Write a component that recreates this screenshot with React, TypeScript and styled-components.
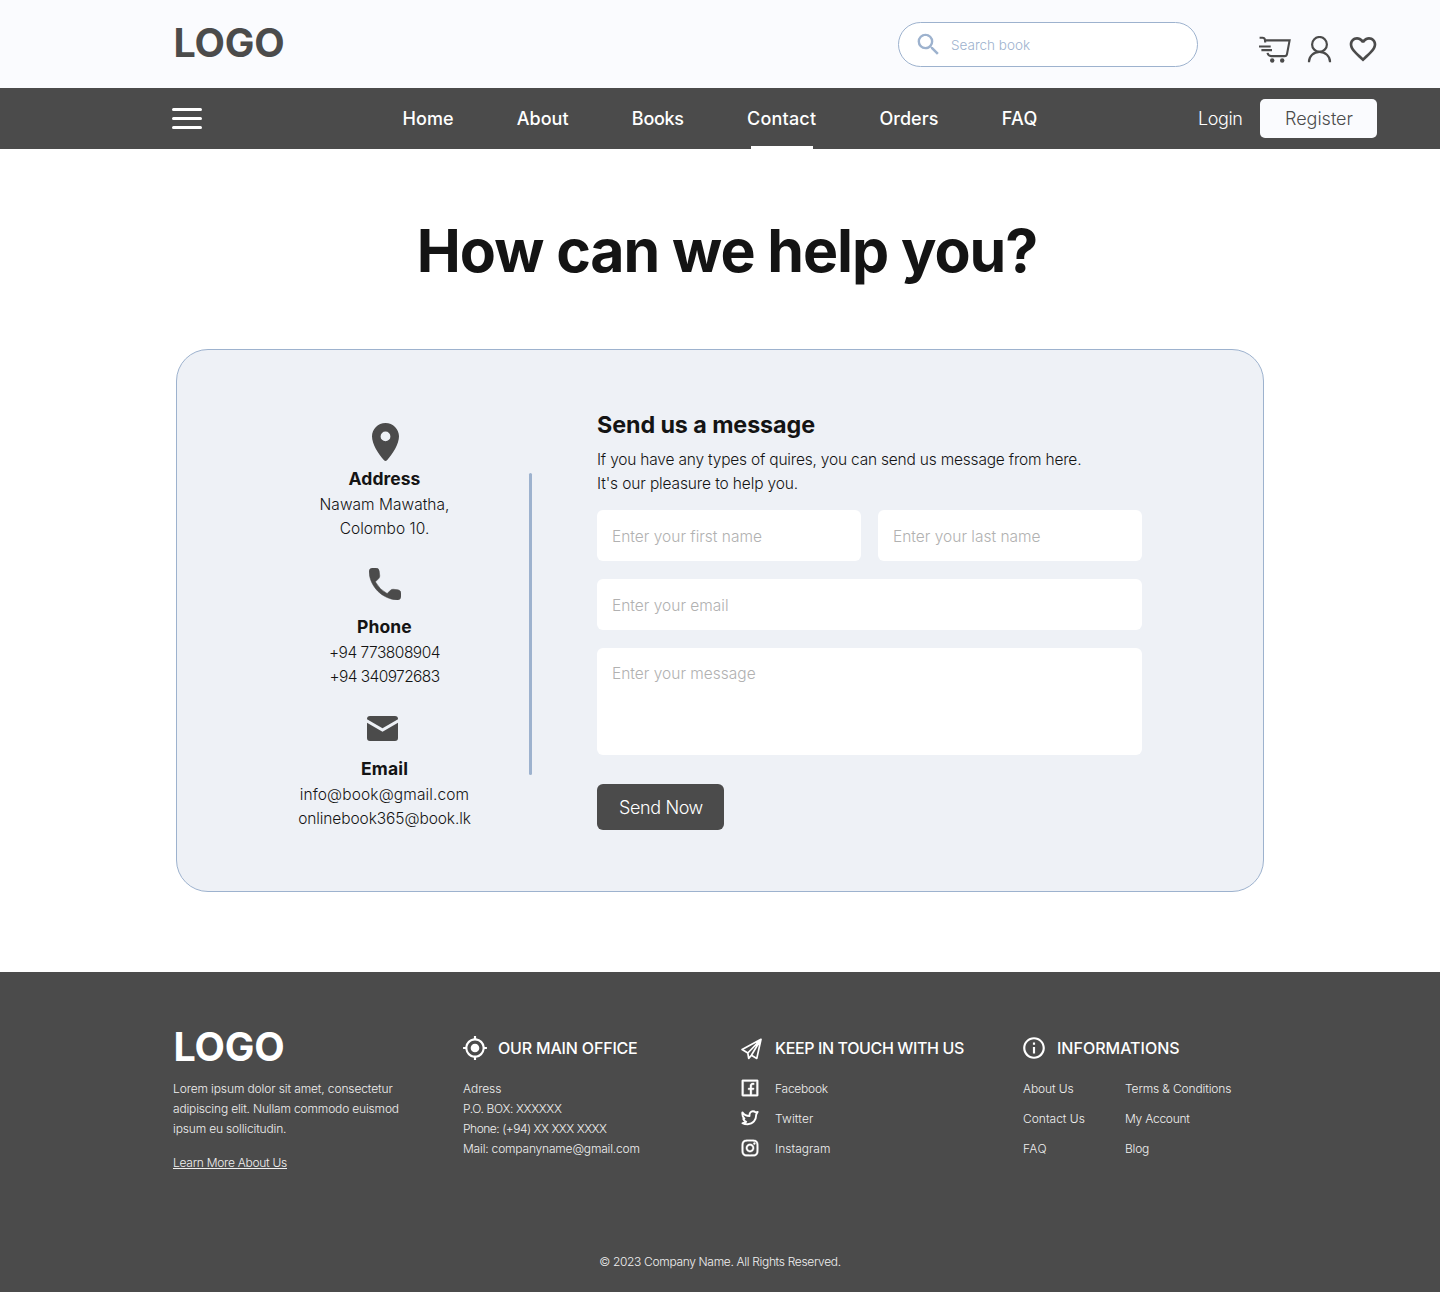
import React from "react";
import styled, { createGlobalStyle } from "styled-components";
import { MdSearch, MdFavoriteBorder, MdMyLocation, MdInfoOutline } from "react-icons/md";
import { RiFacebookBoxLine, RiInstagramLine } from "react-icons/ri";

const ink = "#4b4b4b";
const pale = "#fafbfe";
const blue = "#9db2ce";
const text = "#141414";

type Track = { $track?: number };

const GlobalStyle = createGlobalStyle`
  *, *::before, *::after { box-sizing: border-box; }
  body {
    margin: 0;
    background: #fff;
    color: ${text};
    font-family: Inter, "Liberation Sans", sans-serif;
    font-weight: 300;
  }
  a { color: inherit; text-decoration: none; }
  h1, h2, h3, p, ul { margin: 0; padding: 0; }
  ul { list-style: none; }
  svg { display: block; flex: none; }
  input, textarea, button { font: inherit; border: 0; outline: 0; }
`;

const Page = styled.div`
  width: 1440px;
  height: 1292px;
  display: flex;
  flex-direction: column;
`;

const TopBar = styled.header`
  height: 88px;
  flex: none;
  display: flex;
  align-items: flex-start;
  padding: 22px 63px 0 172px;
  background: ${pale};
`;

const Logo = styled.a`
  display: block;
  height: 41px;
  padding-left: 0.5px;
  font-size: 39.5px;
  line-height: 43px;
  font-weight: 700;
  letter-spacing: -0.2px;
  color: inherit;
`;

const HeaderLogo = styled(Logo)`
  padding-left: 1.5px;
  color: ${ink};
  margin-right: auto;
`;

const SearchBox = styled.label`
  width: 300px;
  height: 45px;
  display: flex;
  align-items: center;
  gap: 8px;
  padding: 0 20px 0 15px;
  border: 1px solid ${blue};
  border-radius: 22.5px;
  background: #fff;
  color: ${blue};
`;

const SearchInput = styled.input`
  flex: 1;
  min-width: 0;
  padding: 0;
  font-size: 13.5px;
  line-height: 20px;
  background: transparent;
  color: ${ink};
  &::placeholder { color: ${blue}; opacity: 1; }
`;

const HeaderIcons = styled.div`
  height: 54px;
  display: flex;
  align-items: center;
  gap: 15px;
  margin-left: 61px;
  margin-right: -2px;
  color: ${ink};
`;

const NavBar = styled.nav`
  height: 61px;
  flex: none;
  display: flex;
  align-items: center;
  padding: 0 63px 0 172px;
  background: ${ink};
  color: #fff;
`;

const MenuButton = styled.button`
  width: 30px;
  padding: 0;
  display: flex;
  flex-direction: column;
  gap: 6px;
  background: transparent;
`;

const MenuLine = styled.span`
  height: 3px;
  border-radius: 1.5px;
  background: #fff;
`;

const NavList = styled.ul`
  display: flex;
  gap: 63.3px;
  margin-left: 200.5px;
  height: 61px;
`;

const NavLink = styled.a<Track & { $active?: boolean }>`
  height: 61px;
  display: block;
  position: relative;
  font-size: 18px;
  line-height: 61px;
  font-weight: 500;
  letter-spacing: ${(p) => p.$track ?? 0}px;
  &::after {
    content: "";
    display: ${(p) => (p.$active ? "block" : "none")};
    position: absolute;
    left: 3.6px;
    bottom: 0;
    width: 62px;
    height: 3px;
    background: #fff;
  }
`;

const Account = styled.div`
  display: flex;
  align-items: center;
  gap: 17.500px;
  margin-left: auto;
`;

const Login = styled.a`
  font-size: 18px;
  letter-spacing: -0.4px;
`;

const Register = styled.a`
  width: 117px;
  height: 39px;
  padding-left: 1px;
  border-radius: 5px;
  background: ${pale};
  color: ${ink};
  font-size: 18px;
  line-height: 39px;
  text-align: center;
`;

const Main = styled.main`
  height: 823px;
  flex: none;
  display: flex;
  flex-direction: column;
  align-items: center;
`;

const Title = styled.h1`
  padding: 62px 0 0 14px;
  height: 200px;
  font-size: 59px;
  line-height: 80px;
  font-weight: 700;
  letter-spacing: -1.07px;
`;

const Card = styled.section`
  width: 1088px;
  height: 543px;
  display: flex;
  align-items: flex-start;
  padding-left: 87px;
  border: 1px solid ${blue};
  border-radius: 32px;
  background: #eef1f6;
`;

const Contacts = styled.div`
  width: 241px;
  padding-top: 64px;
`;

const Contact = styled.div<{ $height: number }>`
  height: ${(p) => p.$height}px;
  display: flex;
  flex-direction: column;
  align-items: center;
  justify-content: flex-end;
`;

const ContactIcon = styled.div<{ $space: number; $left?: number; $right?: number }>`
  padding-left: ${(p) => p.$left ?? 0}px;
  padding-right: ${(p) => p.$right ?? 0}px;
  margin-bottom: ${(p) => p.$space}px;
  color: ${ink};
`;

const ContactTitle = styled.h3<Track>`
  font-size: 17.5px;
  line-height: 28px;
  font-weight: 700;
  letter-spacing: ${(p) => p.$track ?? 0}px;
`;

const ContactLine = styled.p<Track>`
  font-size: 15.5px;
  line-height: 24px;
  letter-spacing: ${(p) => p.$track ?? 0}px;
`;

const Divider = styled.div`
  width: 3px;
  height: 302px;
  margin: 123px 65px 0 24px;
  border-radius: 1.5px;
  background: ${blue};
`;

const Form = styled.form`
  width: 545px;
  padding-top: 59px;
  display: flex;
  flex-direction: column;
`;

const FormTitle = styled.h2`
  font-size: 23.3px;
  line-height: 32px;
  font-weight: 700;
  letter-spacing: -0.08px;
`;

const Intro = styled.p`
  margin: 7px 0 14px;
`;

const IntroLine = styled.span<Track>`
  display: block;
  white-space: nowrap;
  font-size: 15.5px;
  line-height: 24px;
  letter-spacing: ${(p) => p.$track ?? 0}px;
`;

const NameRow = styled.div`
  display: grid;
  grid-template-columns: 1fr 1fr;
  gap: 17px;
`;

const Field = styled.input`
  width: 100%;
  height: 51px;
  padding: 1px 15px 0;
  border-radius: 6px;
  background: #fff;
  color: ${text};
  font-size: 15.5px;
  letter-spacing: 0;
  &::placeholder { color: #b1b1b1; opacity: 1; }
`;

const EmailField = styled(Field)`
  margin: 18px 0;
`;

const MessageField = styled(Field)`
  display: block;
  height: 107px;
  padding: 14px 15px 0;
  line-height: 24px;
  resize: none;
`;

const SendButton = styled.button`
  width: 127px;
  height: 46px;
  margin-top: 29px;
  padding: 0 0 0 1px;
  border-radius: 6px;
  background: ${ink};
  color: #fff;
  font-size: 18px;
  letter-spacing: -0.4px;
`;

const Footer = styled.footer`
  flex: 1;
  display: flex;
  flex-direction: column;
  justify-content: space-between;
  padding: 54px 0 20px 173px;
  background: ${ink};
  color: #fff;
`;

const FooterGrid = styled.div`
  display: grid;
  grid-template-columns: 290px 278px 282px 1fr;
`;

const FooterHeading = styled.h2<Track & { $gap: number; $space: number }>`
  height: 25px;
  margin: 10px 0 ${(p) => p.$space}px;
  display: flex;
  align-items: center;
  gap: ${(p) => p.$gap}px;
  font-size: 16px;
  line-height: 25px;
  font-weight: 500;
  letter-spacing: ${(p) => p.$track ?? 0}px;
`;

const TargetIcon = styled(MdMyLocation)`
  margin: -2px 0 0 -1px;
`;

const InfoIcon = styled(MdInfoOutline)`
  margin: -2px 0 0 -2px;
`;

const FooterLine = styled.p<Track>`
  font-size: 12px;
  line-height: 20px;
  letter-spacing: ${(p) => p.$track ?? 0}px;
  color: #f0f0f0;
`;

const About = styled.div`
  padding-top: 12px;
`;

const LearnMore = styled.a`
  display: block;
  margin-top: 14px;
  font-size: 12px;
  line-height: 20px;
  letter-spacing: -0.27px;
  color: #f0f0f0;
  text-decoration: underline;
  text-underline-offset: 1px;
`;

const SocialLink = styled.a`
  height: 30px;
  display: grid;
  grid-template-columns: 18px auto;
  column-gap: 16px;
  align-items: center;
  justify-items: center;
  justify-content: start;
  svg {
    margin-top: -3px;
  }
`;

const FacebookIcon = styled(RiFacebookBoxLine)`
  stroke: currentColor;
  stroke-width: 0.4px;
`;

const InstagramIcon = styled(RiInstagramLine)`
  stroke: currentColor;
  stroke-width: 0.4px;
`;

const LinkGrid = styled.div`
  display: grid;
  grid-template-columns: 102px auto;
  grid-auto-rows: 30px;
  align-items: center;
`;

const Copyright = styled(FooterLine)`
  text-align: center;
  margin-left: -173px;
`;

const CartIcon = () => (
  <svg width="33" height="28" viewBox="0 -0.5 33 28" fill="none" stroke="currentColor" strokeWidth="2.1">
    <path d="M0.6 2.3h2.9c1.7 0 2.3.7 2.5 2.2l.2 2.5M6 4.9h24.6L28 18.6c-.3 1.5-1 2-2.3 2H12.2c-2 0-3.2-.8-3.7-3.2" />
    <path d="M0 11h11.7M2.4 14.6h10.6" />
    <circle cx="13.2" cy="25" r="2.2" fill="currentColor" stroke="none" />
    <circle cx="23.2" cy="25" r="2.2" fill="currentColor" stroke="none" />
  </svg>
);

const UserIcon = () => (
  <svg width="25" height="27" viewBox="0 0 25 27" fill="none" stroke="currentColor" strokeWidth="2.2">
    <circle cx="12.5" cy="8.4" r="7.4" />
    <path d="M2 26.2v-.5a10.5 9.9 0 0 1 21 0v.5" />
  </svg>
);

const PinIcon = () => (
  <svg width="27" height="38" viewBox="0 0 27 38" fill="currentColor">
    <path
      fillRule="evenodd"
      d="M13.5 0C6 0 0 6 0 13.3c0 8.2 6.5 17.5 12 24q1.5 1.2 3 0C20.5 30.8 27 21.5 27 13.3 27 6 21 0 13.5 0zm0 18.3a4.9 4.9 0 1 1 0-9.8 4.9 4.9 0 0 1 0 9.8z"
    />
  </svg>
);

const PhoneIcon = () => (
  <svg width="32" height="32" viewBox="3 3 18 18" fill="currentColor">
    <path
      d="M19.23 15.26l-2.54-.29a1.99 1.99 0 0 0-1.64.57l-1.84 1.84a15.045 15.045 0 0 1-6.59-6.59l1.85-1.85c.43-.43.64-1.03.57-1.64l-.29-2.52a2.001 2.001 0 0 0-1.99-1.77H5.03c-1.13 0-2.07.94-2 2.07.53 8.54 7.36 15.36 15.89 15.89 1.13.07 2.07-.87 2.07-2v-1.73c.01-1.01-.75-1.86-1.76-1.98z"
      stroke="currentColor"
      strokeWidth="0.3"
    />
  </svg>
);

const MailIcon = () => (
  <svg width="31" height="25" viewBox="0 0 31 25" fill="currentColor">
    <path d="M3 0h25a3 3 0 0 1 3 3v.2L15.5 12.2 0 3.2V3a3 3 0 0 1 3-3z" />
    <path d="M0 6.8l15.5 9L31 6.8V22a3 3 0 0 1-3 3H3a3 3 0 0 1-3-3z" />
  </svg>
);

const PlaneIcon = () => (
  <svg width="22" height="22" viewBox="0 0 22 22" fill="none" stroke="currentColor" strokeWidth="1.7" strokeLinejoin="round">
    <path d="M20 1.3L1.1 11.6l5.7 3.4.9 5.4 2.7-3.2 5.4 3.2zM6.8 15L20 1.3l-9.6 15.9" />
  </svg>
);

const TwitterIcon = () => (
  <svg width="18" height="16" viewBox="0 0 18 16" fill="none" stroke="currentColor" strokeWidth="1.9" strokeLinejoin="round">
    <path d="M1.4 2.4C3 4.7 5.4 6 8.5 6 8.3 3 9.7 1.3 11.9 1.3c1.2 0 2 .4 2.700 1.100l2.100-.5-1.500 2.700c.1 5.500-3.300 9.600-8.400 9.600-2.300 0-4-.4-5.300-1.100 1.500 0 2.800-.5 3.700-1.300-1.700-.7-2.500-1.500-2.900-2.900l1.100-.3C1.700 7.300 1.100 5 1.400 2.400z" />
  </svg>
);

const navItems = [
  { label: "Home", track: 0.05 },
  { label: "About", track: 0 },
  { label: "Books", track: -0.3 },
  { label: "Contact", track: 0.2 },
  { label: "Orders", track: 0 },
  { label: "FAQ", track: 0.4 },
];

const infoLinks = [
  ["About Us", -0.1],
  ["Terms & Conditions", -0.13],
  ["Contact Us", 0],
  ["My Account", -0.25],
  ["FAQ", 0.4],
  ["Blog", -0.2],
] as const;

export default function App() {
  return (
    <Page>
      <GlobalStyle />
      <TopBar>
        <HeaderLogo href="#">LOGO</HeaderLogo>
        <SearchBox>
          <MdSearch size={29} />
          <SearchInput placeholder="Search book" />
        </SearchBox>
        <HeaderIcons>
          <CartIcon />
          <UserIcon />
          <MdFavoriteBorder size={32} />
        </HeaderIcons>
      </TopBar>
      <NavBar>
        <MenuButton aria-label="Menu">
          <MenuLine />
          <MenuLine />
          <MenuLine />
        </MenuButton>
        <NavList>
          {navItems.map((item) => (
            <li key={item.label}>
              <NavLink href="#" $track={item.track} $active={item.label === "Contact"}>
                {item.label}
              </NavLink>
            </li>
          ))}
        </NavList>
        <Account>
          <Login href="#">Login</Login>
          <Register href="#">Register</Register>
        </Account>
      </NavBar>

      <Main>
        <Title>How can we help you?</Title>
        <Card>
          <Contacts>
            <Contact $height={127}>
              <ContactIcon $space={4} $left={1}><PinIcon /></ContactIcon>
              <ContactTitle $track={0.06}>Address</ContactTitle>
              <ContactLine $track={0.02}>Nawam Mawatha,</ContactLine>
              <ContactLine $track={0.03}>Colombo 10.</ContactLine>
            </Contact>
            <Contact $height={148}>
              <ContactIcon $space={13} $left={1}><PhoneIcon /></ContactIcon>
              <ContactTitle $track={0.1}>Phone</ContactTitle>
              <ContactLine $track={-0.5}>+94 773808904</ContactLine>
              <ContactLine $track={-0.6}>+94 340972683</ContactLine>
            </Contact>
            <Contact $height={142}>
              <ContactIcon $space={14} $right={4}><MailIcon /></ContactIcon>
              <ContactTitle $track={0.2}>Email</ContactTitle>
              <ContactLine $track={0.12}>info@book@gmail.com</ContactLine>
              <ContactLine $track={-0.09}>onlinebook365@book.lk</ContactLine>
            </Contact>
          </Contacts>
          <Divider />
          <Form>
            <FormTitle>Send us a message</FormTitle>
            <Intro>
              <IntroLine $track={-0.2}>
                If you have any types of quires, you can send us message from here.
              </IntroLine>
              <IntroLine $track={-0.13}>It's our pleasure to help you.</IntroLine>
            </Intro>
            <NameRow>
              <Field placeholder="Enter your first name" />
              <Field placeholder="Enter your last name" />
            </NameRow>
            <EmailField placeholder="Enter your email" />
            <MessageField as="textarea" placeholder="Enter your message" />
            <SendButton type="button">Send Now</SendButton>
          </Form>
        </Card>
      </Main>

      <Footer>
        <FooterGrid>
          <div>
            <Logo href="#">LOGO</Logo>
            <About>
              <FooterLine $track={-0.12}>Lorem ipsum dolor sit amet, consectetur</FooterLine>
              <FooterLine $track={-0.17}>adipiscing elit. Nullam commodo euismod</FooterLine>
              <FooterLine $track={-0.16}>ipsum eu sollicitudin.</FooterLine>
              <LearnMore href="#">Learn More About Us</LearnMore>
            </About>
          </div>
          <div>
            <FooterHeading $gap={10} $space={18} $track={-0.18}>
              <TargetIcon size={26} />
              OUR MAIN OFFICE
            </FooterHeading>
            <FooterLine $track={-0.05}>Adress</FooterLine>
            <FooterLine $track={-0.36}>P.O. BOX: XXXXXX</FooterLine>
            <FooterLine $track={-0.48}>Phone: (+94) XX XXX XXXX</FooterLine>
            <FooterLine $track={-0.19}>Mail: companyname@gmail.com</FooterLine>
          </div>
          <div>
            <FooterHeading $gap={12} $space={13} $track={-0.37}>
              <PlaneIcon />
              KEEP IN TOUCH WITH US
            </FooterHeading>
            <SocialLink href="#">
              <FacebookIcon size={22} />
              <FooterLine as="span" $track={-0.25}>Facebook</FooterLine>
            </SocialLink>
            <SocialLink href="#">
              <TwitterIcon />
              <FooterLine as="span" $track={0.13}>Twitter</FooterLine>
            </SocialLink>
            <SocialLink href="#">
              <InstagramIcon size={20} />
              <FooterLine as="span" $track={0.02}>Instagram</FooterLine>
            </SocialLink>
          </div>
          <div>
            <FooterHeading $gap={10} $space={13} $track={0}>
              <InfoIcon size={26} />
              INFORMATIONS
            </FooterHeading>
            <LinkGrid>
              {infoLinks.map(([label, track]) => (
                <FooterLine as="a" href="#" key={label} $track={track}>
                  {label}
                </FooterLine>
              ))}
            </LinkGrid>
          </div>
        </FooterGrid>
        <Copyright $track={-0.33}>© 2023 Company Name. All Rights Reserved.</Copyright>
      </Footer>
    </Page>
  );
}
